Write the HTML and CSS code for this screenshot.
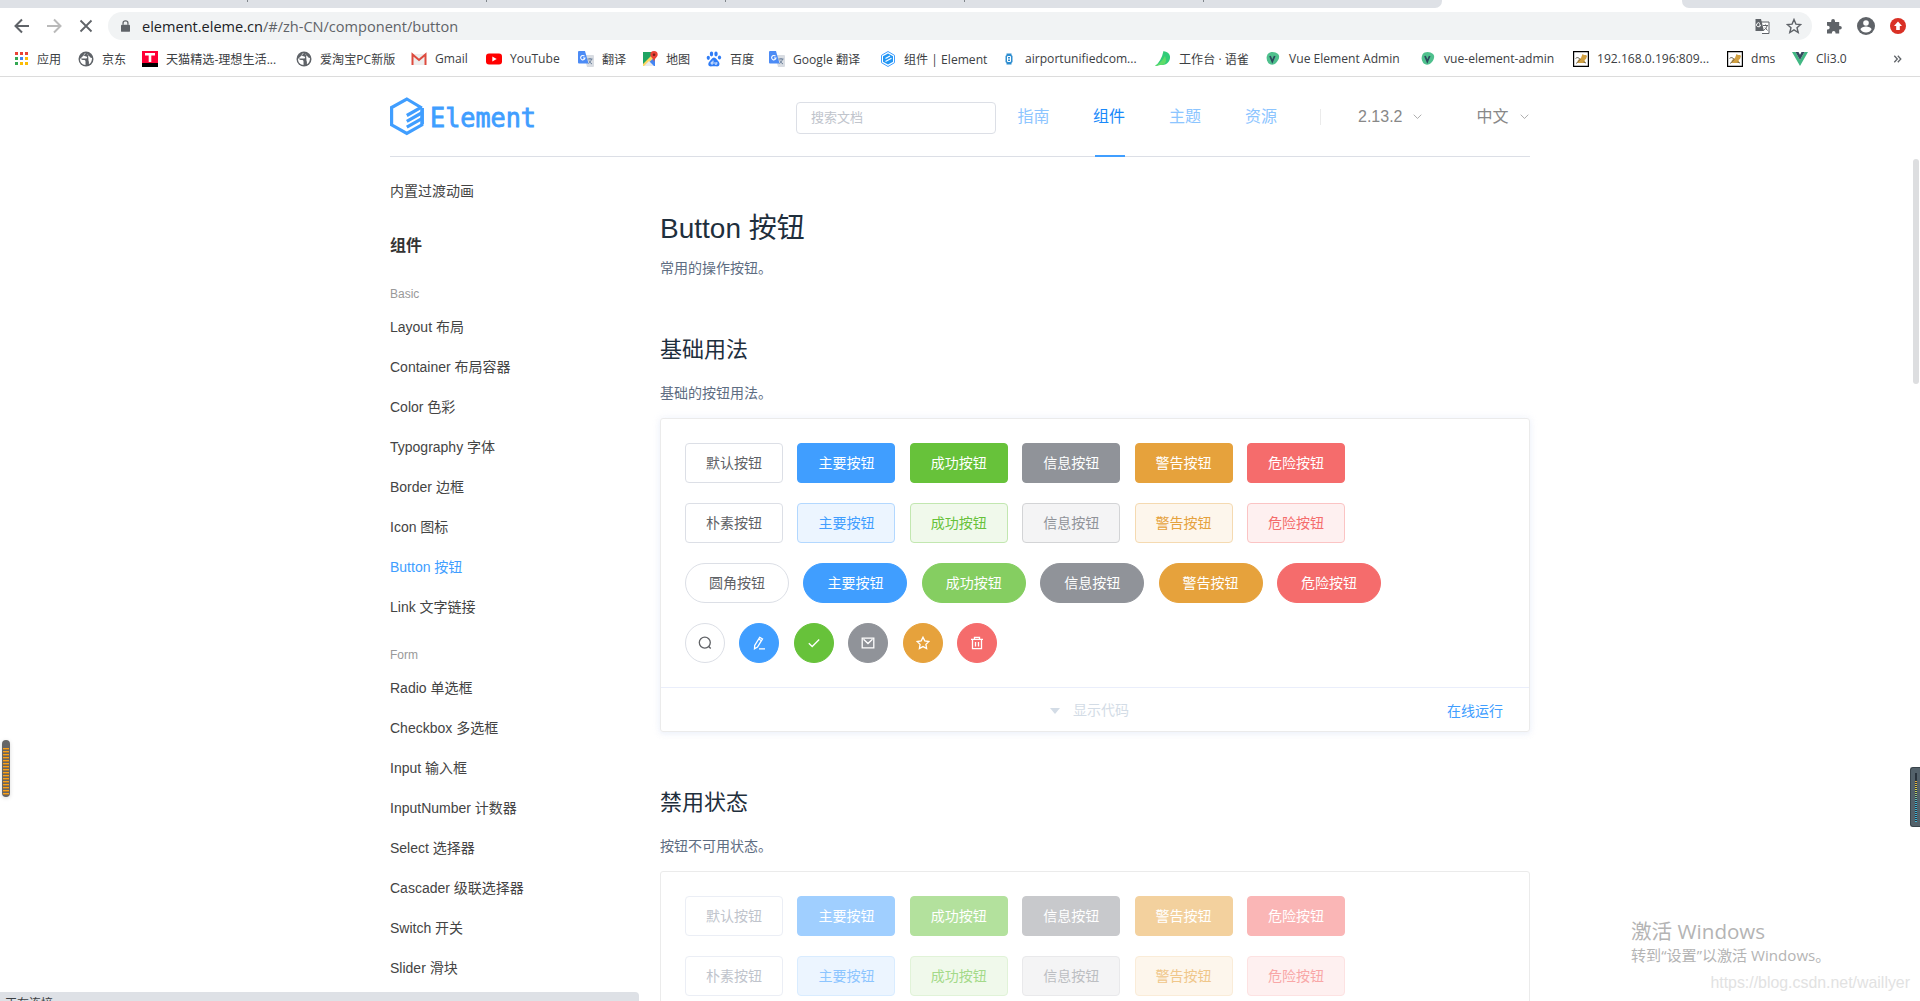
FILE: index.html
```html
<!DOCTYPE html>
<html lang="zh-CN">
<head>
    <meta charset="UTF-8">
    <meta name="viewport" content="width=device-width, initial-scale=1.0">
    <title>组件 | Element</title>
    <link rel="stylesheet" href="styles.css">
</head>
<body>
    <svg class="defs" width="0" height="0">
        <symbol id="globe" viewBox="0 0 16 16"><circle cx="8" cy="8" r="7.500" fill="#5f6368"/><path d="M8 2C6 2.500 5.500 3.500 6 4.500s2.500.5 3 1.500-.5 1.500-1.500 1.500H3c0 1 1.500 1.500 3 1.500 1 0 1.500.5 1.500 1.500V14c-3-.2-5.500-2.500-5.500-6M10 2.500c-1 1 0 2 1 2.500s1 2 3 2c0 3-1 5-3 6.200-.5-1.200.5-2.200-.5-3.200" fill="#fff"/></symbol>
        <symbol id="translate" viewBox="0 0 16 16"><path d="M6 4h9a1 1 0 0 1 1 1v10a1 1 0 0 1-1 1H9z" fill="#d8dce2"/><path d="M9.500 8h5M12 7v1M13.500 8c-.5 2-1.500 3.500-3 4.500M11 9.500c.5 1.500 1.500 2.500 3 3.500" stroke="#6b7f99" fill="none"/><path d="M1 0h6l3.500 12.500H1a1 1 0 0 1-1-1V1a1 1 0 0 1 1-1z" fill="#4c8bf5"/><path d="M6.500 5.200A2.200 2.200 0 1 0 7 7H5" stroke="#fff" fill="none" stroke-width="1.100"/></symbol>
        <symbol id="vue-admin" viewBox="0 0 16 16"><path d="M2.500 3.500c2-3.500 8-3 10.500-.5s.5 6.500-2 9-6.500 2-8-.5-2-5-.5-8z" fill="#4fc08d"/><path d="M5 5l2.300 5.500L9.700 5" stroke="#2c4a5e" stroke-width="1.800" fill="none"/></symbol>
        <symbol id="tomcat" viewBox="0 0 16 16"><path d="M.6.6h14.800v14.800H.6z" fill="#fff" stroke="#000" stroke-width="1.200"/><path d="M4 12l1-3 3-2 1.500-4 1.500 1h2l1 1-1 3-1.500 1 1 3z" fill="#d1a041"/><path d="M2.500 7.500l1.500-1 2 .5 1 1.500-1.500 2-2.500 2M10.500 11l2.500 1" stroke="#6b6250" fill="none" stroke-width=".9"/></symbol>
        <symbol id="chevron" viewBox="0 0 10 10"><path d="M.8 3l4.200 4.200L9.200 3" fill="none" stroke="currentColor" stroke-width=".9"/></symbol>
    </svg>

    <div class="browser">
        <div class="tab-strip">
            <div class="tabs-left"><i></i><i></i><i></i><i></i><i></i></div>
            <div class="tab-active"></div>
            <div class="tabs-right"></div>
        </div>
        <div class="toolbar">
            <svg class="nav-icon" viewBox="0 0 16 16"><path d="M15 8H2M8 1.500L1.500 8 8 14.500" fill="none" stroke="#5f6368" stroke-width="2"/></svg>
            <svg class="nav-icon" viewBox="0 0 16 16"><path d="M1 8h13M8 1.500L14.500 8 8 14.500" fill="none" stroke="#bababa" stroke-width="2"/></svg>
            <svg class="nav-icon" viewBox="0 0 16 16"><path d="M2.500 2.500l11 11M13.500 2.500l-11 11" fill="none" stroke="#5f6368" stroke-width="1.800"/></svg>
            <div class="omnibox">
                <svg class="lock" viewBox="0 0 10 13"><path d="M1 5h8a1 1 0 0 1 1 1v6a1 1 0 0 1-1 1H1a1 1 0 0 1-1-1V6a1 1 0 0 1 1-1z" fill="#5f6368"/><path d="M2.300 5V3a2.700 2.200 0 0 1 5.400 0v2" fill="none" stroke="#5f6368" stroke-width="1.400"/></svg>
                <span class="url">element.eleme.cn<span class="path">/#/zh-CN/component/button</span></span>
                <svg class="box-icon" viewBox="0 0 16 16"><path d="M7 4h8v11.500H8" fill="#fff" stroke="#5f6368"/><path d="M9 7.500h5M11.500 6.500v1M13 8c-.5 2-1.500 3-3 4M11 9.500l2.500 3" stroke="#5f6368" fill="none"/><path d="M1.500 1H7l3 12H1.500z" fill="#5f6368"/><path d="M6 5.500A2 2 0 1 0 6.500 7H5" stroke="#fff" fill="none"/></svg>
                <svg class="box-icon star" viewBox="0 0 16 16"><path d="M8 1.500l1.900 4.600 4.800.4-3.700 3.200 1.200 4.800L8 11.900l-4.200 2.600L5 9.700 1.300 6.500l4.800-.4z" fill="none" stroke="#5f6368" stroke-width="1.400"/></svg>
            </div>
            <svg class="ext" viewBox="0 0 16 16"><path d="M1 4h4.200V3a1.900 1.900 0 0 1 3.800 0v1h4.200v4h.8a1.800 1.800 0 0 1 0 3.600h-.8V15.500H9.500v-.8a1.800 1.800 0 0 0-3.600 0v.8H1v-4h.8a1.900 1.900 0 0 0 0-3.800H1z" fill="#5f6368"/></svg>
            <svg class="avatar" viewBox="0 0 18 18"><circle cx="9" cy="9" r="9" fill="#5f6368"/><circle cx="9" cy="6" r="2.800" fill="#fff"/><path d="M3.500 12.500c0-2 3.500-3 5.500-3s5.500 1 5.500 3c-1.200 1.800-3 3-5.500 3s-4.300-1.200-5.500-3z" fill="#fff"/></svg>
            <svg class="update" viewBox="0 0 16 16"><circle cx="8" cy="8" r="8" fill="#d93025"/><path d="M8 3.500L12 8H9.800v4H6.200V8H4z" fill="#fff"/></svg>
        </div>
        <div class="bookmarks">
            <div class="bookmark apps"><svg viewBox="0 0 16 16"><path d="M2 1h3v3H2zM7 1h3v3H7zM12 1h3v3h-3z" fill="#ea4335"/><path d="M2 6h3v3H2zM2 11h3v3H2z" fill="#34a853"/><path d="M7 6h3v3H7z" fill="#4285f4"/><path d="M12 6h3v3h-3zM7 11h3v3H7zM12 11h3v3h-3z" fill="#fbbc05"/></svg><span>应用</span></div>
            <div class="bookmark"><svg><use href="#globe"/></svg><span>京东</span></div>
            <div class="bookmark"><svg viewBox="0 0 16 16"><path d="M0 0h16v16H0z" fill="#ff0036"/><path d="M0 12h16v4H0z" fill="#000"/><path d="M3 2h10v2.500H9.300V11H6.700V4.500H3z" fill="#fff"/></svg><span>天猫精选-理想生活...</span></div>
            <div class="bookmark"><svg><use href="#globe"/></svg><span>爱淘宝PC新版</span></div>
            <div class="bookmark"><svg viewBox="0 0 16 16"><path d="M1 3h14v11H1z" fill="#eee"/><path d="M1.500 14V3.500L8 9l6.500-5.500V14" fill="none" stroke="#dd4b3e" stroke-width="2"/></svg><span>Gmail</span></div>
            <div class="bookmark"><svg viewBox="0 0 16 16"><rect y="2.500" width="16" height="11" rx="3" fill="#f00"/><path d="M6.300 5.500v5L10.700 8z" fill="#fff"/></svg><span>YouTube</span></div>
            <div class="bookmark"><svg><use href="#translate"/></svg><span>翻译</span></div>
            <div class="bookmark"><svg viewBox="0 0 16 16"><path d="M1 1h12v14H1z" fill="#1fa463"/><path d="M1 15L13 3v12z" fill="#4285f4"/><path d="M1 13L12 2l2 3L3 15H1z" fill="#fdd663"/><path d="M7 10l5 5H2z" fill="#e8eaed"/><path d="M12 0a3.700 3.700 0 0 1 3.700 3.700C15.700 6 12.500 7 12 11c-.5-4-3.700-5-3.700-7.300A3.700 3.700 0 0 1 12 0z" fill="#ea4335"/><circle cx="12" cy="3.700" r="1.300" fill="#7b1f18"/></svg><span>地图</span></div>
            <div class="bookmark"><svg viewBox="0 0 16 16"><g fill="#2f7cf6"><ellipse cx="5.500" cy="3" rx="1.700" ry="2.400"/><ellipse cx="10" cy="3" rx="1.700" ry="2.400"/><ellipse cx="2.300" cy="6.800" rx="1.600" ry="2.100"/><ellipse cx="13.500" cy="6.500" rx="1.600" ry="2.100"/><path d="M8 6.500c2 0 3 2.500 4.500 4s1.500 5-1.500 5c-1.500 0-4.500-.3-6 0-3 0-3.500-3-1.500-5C5 9 6 6.500 8 6.500z"/></g><path d="M7 9.500V13H5.200v-1.800H7M9 11v2.200h1.800V11" fill="none" stroke="#fff" stroke-width=".8"/></svg><span>百度</span></div>
            <div class="bookmark"><svg><use href="#translate"/></svg><span>Google 翻译</span></div>
            <div class="bookmark"><svg viewBox="0 0 16 16"><path d="M8 .5l6.500 3.800v7.400L8 15.500l-6.500-3.800V4.300z" fill="#fff" stroke="#409eff"/><path d="M8 2.500l5 2.800v5.400l-5 2.800-5-2.800V5.300z" fill="#2296f3"/><path d="M5.500 7.500L10 5M5.500 10.500l6-3.200" stroke="#fff" stroke-width="1.200"/></svg><span>组件 | Element</span></div>
            <div class="bookmark"><svg viewBox="0 0 16 16"><path d="M5.500 2.500h5V4l1 1v6l-1 1v1.500h-5V12l-1-1V5l1-1z" fill="#2d8dd0"/><path d="M6.500 5.500h3v5h-3zM6.500 8h3" fill="none" stroke="#fff"/></svg><span>airportunifiedcom...</span></div>
            <div class="bookmark"><svg viewBox="0 0 16 16"><path d="M0 15C4 12 7 7 8.500 0c3.500 1 6 2 6.500 5.500S13 14 7 14c-3 0-4 .5-7 1z" fill="#31cc79"/><path d="M0 15c5-3 8-6 10-10 2 5 1 8-3 9-3 0-4 .5-7 1z" fill="#5fdc68"/></svg><span>工作台 · 语雀</span></div>
            <div class="bookmark"><svg><use href="#vue-admin"/></svg><span>Vue Element Admin</span></div>
            <div class="bookmark"><svg><use href="#vue-admin"/></svg><span>vue-element-admin</span></div>
            <div class="bookmark"><svg><use href="#tomcat"/></svg><span>192.168.0.196:809...</span></div>
            <div class="bookmark"><svg><use href="#tomcat"/></svg><span>dms</span></div>
            <div class="bookmark"><svg viewBox="0 0 16 16"><path d="M0 1h3.500L8 9l4.500-8H16L8 15z" fill="#41b883"/><path d="M3.500 1h3L8 3.700 9.500 1h3L8 9z" fill="#35495e"/></svg><span>Cli3.0</span></div>
            <div class="more"><svg viewBox="0 0 8 8"><path d="M.8.8L3.800 4l-3 3.200M4.300.8L7.300 4l-3 3.200" fill="none" stroke="#5f6368" stroke-width="1.300"/></svg></div>
        </div>
    </div>

    <header class="header container">
        <svg class="logo" viewBox="0 0 148 40">
            <path d="M31.900 11L16.800 2 1.600 10.500v17.300l15.200 8.500 15.100-8.500V11" fill="none" stroke="#409eff" stroke-width="3.200"/>
            <path d="M16.800 18.500L31.500 10.200M16.800 24.300l15.500-8.800M16.800 30.100l15.500-8.800" fill="none" stroke="#409eff" stroke-width="3.200"/>
            <path d="M32.400 11v16" stroke="#409eff" stroke-width="3"/>
            <text x="40" y="29.500" textLength="106" lengthAdjust="spacingAndGlyphs">Element</text>
        </svg>
        <div class="search">搜索文档</div>
        <nav class="nav">
            <a>指南</a>
            <a class="active">组件</a>
            <a>主题</a>
            <a>资源</a>
        </nav>
        <span class="divider"></span>
        <div class="version">2.13.2<svg><use href="#chevron"/></svg></div>
        <div class="lang">中文<svg><use href="#chevron"/></svg></div>
    </header>

    <main class="main container">
        <aside class="side-nav">
            <a>内置过渡动画</a>
            <h4>组件</h4>
            <h5>Basic</h5>
            <a>Layout 布局</a>
            <a>Container 布局容器</a>
            <a>Color 色彩</a>
            <a>Typography 字体</a>
            <a>Border 边框</a>
            <a>Icon 图标</a>
            <a class="active">Button 按钮</a>
            <a>Link 文字链接</a>
            <h5 class="form-group">Form</h5>
            <a>Radio 单选框</a>
            <a>Checkbox 多选框</a>
            <a>Input 输入框</a>
            <a>InputNumber 计数器</a>
            <a>Select 选择器</a>
            <a>Cascader 级联选择器</a>
            <a>Switch 开关</a>
            <a>Slider 滑块</a>
        </aside>

        <article class="content">
            <h2>Button 按钮</h2>
            <p>常用的操作按钮。</p>
            <h3>基础用法</h3>
            <p>基础的按钮用法。</p>
            <section class="demo hover">
                <div class="source">
                    <div class="row">
                        <button class="btn">默认按钮</button>
                        <button class="btn primary">主要按钮</button>
                        <button class="btn success">成功按钮</button>
                        <button class="btn info">信息按钮</button>
                        <button class="btn warning">警告按钮</button>
                        <button class="btn danger">危险按钮</button>
                    </div>
                    <div class="row">
                        <button class="btn">朴素按钮</button>
                        <button class="btn primary plain">主要按钮</button>
                        <button class="btn success plain">成功按钮</button>
                        <button class="btn info plain">信息按钮</button>
                        <button class="btn warning plain">警告按钮</button>
                        <button class="btn danger plain">危险按钮</button>
                    </div>
                    <div class="row">
                        <button class="btn round">圆角按钮</button>
                        <button class="btn round primary">主要按钮</button>
                        <button class="btn round success light">成功按钮</button>
                        <button class="btn round info">信息按钮</button>
                        <button class="btn round warning">警告按钮</button>
                        <button class="btn round danger">危险按钮</button>
                    </div>
                    <div class="row">
                        <button class="btn circle"><svg viewBox="0 0 14 14"><circle cx="6.800" cy="6.600" r="5.500"/><path d="M10.700 10.500l2 2"/></svg></button>
                        <button class="btn circle primary"><svg viewBox="0 0 14 14"><path d="M7.700 1.300l2.800 1.600-5 8.200-3 1.700.2-3.300zM6.700 3l2.800 1.700M7 12.800h6"/></svg></button>
                        <button class="btn circle success"><svg viewBox="0 0 14 14"><path d="M1.800 7.200l3.400 3.300 7-7"/></svg></button>
                        <button class="btn circle info"><svg viewBox="0 0 14 14"><path d="M1.200 2.200h11.600v9.600H1.200zM2.500 3.200L7 7.500l4.500-4.300"/></svg></button>
                        <button class="btn circle warning"><svg viewBox="0 0 14 14"><path d="M7 1.200l1.800 3.700 4.100.6-3 2.900.7 4.100L7 10.600l-3.600 1.900.7-4.100-3-2.900 4.100-.6z"/></svg></button>
                        <button class="btn circle danger"><svg viewBox="0 0 14 14"><path d="M1 3.300h12M4.500 3V1.300h5V3M2.500 3.500v9.200h9V3.500M5.500 6v4.500M8.500 6v4.500"/></svg></button>
                    </div>
                </div>
                <div class="control">
                    <i class="caret"></i><span class="toggle">显示代码</span>
                    <a class="run">在线运行</a>
                </div>
            </section>

            <h3>禁用状态</h3>
            <p>按钮不可用状态。</p>
            <section class="demo">
                <div class="source disabled">
                    <div class="row">
                        <button class="btn">默认按钮</button>
                        <button class="btn primary">主要按钮</button>
                        <button class="btn success">成功按钮</button>
                        <button class="btn info">信息按钮</button>
                        <button class="btn warning">警告按钮</button>
                        <button class="btn danger">危险按钮</button>
                    </div>
                    <div class="row">
                        <button class="btn">朴素按钮</button>
                        <button class="btn primary plain">主要按钮</button>
                        <button class="btn success plain">成功按钮</button>
                        <button class="btn info plain">信息按钮</button>
                        <button class="btn warning plain">警告按钮</button>
                        <button class="btn danger plain">危险按钮</button>
                    </div>
                </div>
            </section>
        </article>
    </main>

    <div class="scrollbar"></div>
    <div class="meter meter-left"><i></i></div>
    <div class="meter meter-right"><i></i></div>
    <div class="activate">
        <div class="activate-title">激活 Windows</div>
        <div class="activate-text">转到“设置”以激活 Windows。</div>
    </div>
    <div class="blog-mark">https://blog.csdn.net/waillyer</div>
    <div class="status">正在连接...</div>
</body>
</html>
```
FILE: styles.css
```css
* {
    box-sizing: border-box;
}

body {
    margin: 0;
    height: 1001px;
    position: relative;
    overflow: hidden;
    background: #fff;
    font-family: "Liberation Sans", "Noto Sans CJK SC", sans-serif;
    font-size: 14px;
}

h2, h3, h4, h5, p {
    margin: 0;
    font-weight: 400;
}

.defs {
    position: absolute;
}

/* browser chrome */
.browser {
    height: 77px;
    border-bottom: 1px solid #dcdcdc;
    font-family: "Open Sans", "Noto Sans CJK SC", sans-serif;
}

.tab-strip {
    display: flex;
    height: 8px;
}

.tabs-left {
    display: flex;
    gap: 238px;
    width: 1442px;
    padding-left: 247px;
    background: #dee1e6;
    border-bottom-right-radius: 7px;
}

.tabs-left i {
    width: 1px;
    height: 2px;
    background: #80868b;
}

.tab-active {
    width: 240px;
}

.tabs-right {
    flex: 1;
    background: #dee1e6;
    border-bottom-left-radius: 7px;
}

.toolbar {
    display: flex;
    align-items: center;
    height: 36px;
    padding-left: 14px;
}

.nav-icon {
    width: 16px;
    height: 16px;
    margin-right: 16px;
}

.omnibox {
    display: flex;
    align-items: center;
    width: 1704px;
    height: 28px;
    margin-left: -2px;
    padding: 0 10px 0 13px;
    border-radius: 14px;
    background: #f1f3f4;
}

.lock {
    width: 9px;
    height: 12px;
}

.url {
    flex: 1;
    margin-left: 12px;
    padding-bottom: 1px;
    font-size: 14.550px;
    color: #202124;
}

.path {
    color: #5f6368;
}

.box-icon {
    width: 16px;
    height: 16px;
}

.star {
    margin-left: 16px;
}

.ext {
    width: 16px;
    height: 16px;
    margin-left: 14px;
}

.avatar {
    width: 18px;
    height: 18px;
    margin-left: 15px;
}

.update {
    width: 16px;
    height: 16px;
    margin-left: 15px;
}

.bookmarks {
    display: grid;
    grid-template-columns: 65px 64px 154px 115px 75px 92px 64px 64px 63px 111px 121px 154px 110px 155px 153px 154px 65px 101px 16px;
    align-items: center;
    height: 29px;
    padding-left: 13px;
}

.bookmark {
    display: flex;
    align-items: center;
    gap: 8px;
    font-size: 12.100px;
    color: #3c4043;
    white-space: nowrap;
}

.bookmark svg {
    flex: none;
    width: 16px;
    height: 16px;
}

.more svg {
    display: block;
    width: 9px;
    height: 8px;
}

/* site header */
.container {
    width: 1140px;
    margin: 0 auto;
}

.header {
    display: flex;
    align-items: center;
    height: 80px;
    border-bottom: 1px solid #dcdfe6;
}

.logo {
    width: 148px;
    height: 40px;
    overflow: visible;
}

.logo text {
    font-family: "DejaVu Sans Mono", monospace;
    font-size: 26px;
    fill: #409eff;
    stroke: #409eff;
    stroke-width: .8px;
}

.search {
    width: 200px;
    height: 32px;
    margin-top: 2px;
    margin-left: 258px;
    padding-left: 14px;
    border: 1px solid #dcdfe6;
    border-radius: 4px;
    font-size: 13px;
    line-height: 29px;
    color: #c0c4cc;
}

.nav {
    display: flex;
}

.nav a {
    display: flex;
    justify-content: center;
    width: 76px;
    height: 80px;
    font-size: 16px;
    line-height: 79px;
    color: #8cc5ff;
}

.nav a:first-child {
    width: 75px;
}

.nav .active {
    color: #1989fa;
    background: linear-gradient(#409eff, #409eff) 24px bottom / 30px 2px no-repeat;
}

.divider {
    width: 1px;
    height: 16px;
    margin-left: 21px;
    background: #ebebeb;
}

.version, .lang {
    display: flex;
    align-items: center;
    gap: 11px;
    height: 40px;
    margin-left: 37px;
    font-size: 16px;
    line-height: 40px;
    color: #888;
}

.lang {
    margin-left: 53px;
}

.version svg, .lang svg {
    width: 9px;
    height: 9px;
    margin-right: 1px;
    color: #999;
}

/* side navigation */
.main {
    display: flex;
}

.side-nav {
    width: 270px;
    padding-top: 14px;
}

.side-nav a {
    display: block;
    height: 40px;
    line-height: 40px;
    color: #444;
}

.side-nav h4 {
    height: 69px;
    line-height: 70px;
    font-size: 16px;
    font-weight: 700;
    color: #333;
}

.side-nav h5 {
    height: 27px;
    line-height: 28px;
    font-size: 12px;
    color: #999;
}

.side-nav h5.form-group {
    margin-top: 14px;
}

.side-nav .active {
    color: #409eff;
}

/* content */
.content {
    width: 870px;
    padding-top: 50px;
}

.content h2 {
    height: 42px;
    line-height: 44px;
    font-size: 28px;
    color: #1f2f3d;
}

.content p {
    height: 40px;
    line-height: 40px;
    color: #5e6d82;
}

.content h3 {
    height: 44px;
    margin-top: 38px;
    line-height: 48px;
    font-size: 22px;
    color: #1f2f3d;
}

.content h2 + p {
    margin-top: -1px;
    margin-bottom: 21px;
}

.content h3 + p {
    margin-top: 3px;
}

.demo {
    margin-top: 5px;
    border: 1px solid #ebebeb;
    border-radius: 3px;
}

.hover {
    box-shadow: 0 0 8px 0 rgba(232, 237, 250, .6), 0 2px 4px 0 rgba(232, 237, 250, .5);
    margin-bottom: 47px;
}

.source {
    display: flex;
    flex-direction: column;
    gap: 20px;
    padding: 24px;
}

.row {
    display: flex;
    gap: 14.400px;
}

.btn {
    width: 98px;
    height: 40px;
    padding: 0 0 3px;
    border: 1px solid #dcdfe6;
    border-radius: 4px;
    background: #fff;
    font: inherit;
    color: #606266;
}

.primary {
    color: #fff;
    background: #409eff;
    border-color: #409eff;
}

.success {
    color: #fff;
    background: #67c23a;
    border-color: #67c23a;
}

.info {
    color: #fff;
    background: #909399;
    border-color: #909399;
}

.warning {
    color: #fff;
    background: #e6a23c;
    border-color: #e6a23c;
}

.danger {
    color: #fff;
    background: #f56c6c;
    border-color: #f56c6c;
}

.light {
    background: #85ce61;
    border-color: #85ce61;
}

.primary.plain {
    color: #409eff;
    background: #ecf5ff;
    border-color: #b3d8ff;
}

.success.plain {
    color: #67c23a;
    background: #f0f9eb;
    border-color: #c2e7b0;
}

.info.plain {
    color: #909399;
    background: #f4f4f5;
    border-color: #d3d4d6;
}

.warning.plain {
    color: #e6a23c;
    background: #fdf6ec;
    border-color: #f5dab1;
}

.danger.plain {
    color: #f56c6c;
    background: #fef0f0;
    border-color: #fbc4c4;
}

.round {
    width: 104px;
    border-radius: 20px;
}

.circle {
    display: flex;
    align-items: center;
    justify-content: center;
    width: 40px;
    padding: 0;
    border-radius: 50%;
}

.circle svg {
    width: 14px;
    height: 14px;
    fill: none;
    stroke: currentColor;
    stroke-width: 1.300;
}

.disabled .btn {
    color: #c0c4cc;
    border-color: #ebeef5;
}

.disabled .primary { color: #fff; background: #a0cfff; border-color: #a0cfff; }
.disabled .success { color: #fff; background: #b3e19d; border-color: #b3e19d; }
.disabled .info { color: #fff; background: #c8c9cc; border-color: #c8c9cc; }
.disabled .warning { color: #fff; background: #f3d19e; border-color: #f3d19e; }
.disabled .danger { color: #fff; background: #fab6b6; border-color: #fab6b6; }

.disabled .primary.plain { color: #8cc5ff; background: #ecf5ff; border-color: #d9ecff; }
.disabled .success.plain { color: #a4da89; background: #f0f9eb; border-color: #e1f3d8; }
.disabled .info.plain { color: #bcbec2; background: #f4f4f5; border-color: #e9e9eb; }
.disabled .warning.plain { color: #f0c78a; background: #fdf6ec; border-color: #faecd8; }
.disabled .danger.plain { color: #f9a7a7; background: #fef0f0; border-color: #fde2e2; }

.control {
    display: grid;
    grid-template-columns: 1fr auto auto 1fr;
    align-items: center;
    height: 44px;
    border-top: 1px solid #eaeefb;
    color: #d3dce6;
}

.caret {
    grid-column: 2;
    margin-top: 2px;
    margin-right: 13px;
    border: 5px solid transparent;
    border-top: 6px solid #d3dce6;
    border-bottom: 0;
}

.toggle {
    margin-right: 11px;
    padding-bottom: 2px;
}

.run {
    justify-self: end;
    margin-right: 26px;
    color: #409eff;
}

/* overlays */
.scrollbar {
    position: absolute;
    top: 159px;
    right: 1px;
    width: 6px;
    height: 225px;
    border-radius: 3px;
    background: #dddee0;
}

.meter {
    position: absolute;
    padding: 8px 1px 2px;
}

.meter i {
    display: block;
    height: 100%;
}

.meter-left {
    top: 740px;
    left: 2px;
    width: 8px;
    height: 57px;
    border-radius: 4px;
    background: #666;
    box-shadow: 0 1px 4px rgba(0, 0, 0, .15);
}

.meter-left i {
    background: repeating-linear-gradient(#f9a11b 0 1px, #a8762f 1px 2px, #666 2px 3px);
}

.meter-right {
    top: 767px;
    right: 0;
    width: 10px;
    height: 60px;
    padding: 5px 3px 4px 4px;
    border: 1px solid #39444b;
    border-right: 0;
    border-radius: 3px 0 0 3px;
    background: #53616a;
}

.meter-right i {
    background: repeating-linear-gradient(transparent 0 1px, #29333c 1px 2px), linear-gradient(#29333c 0 16%, #e5a63a 16%, #dbd74a 35%, #40b3d5 60%);
}

.activate {
    position: absolute;
    left: 1631px;
    top: 917px;
    font-family: "Open Sans", "Noto Sans CJK SC", sans-serif;
    color: #b4b4b4;
    white-space: nowrap;
}

.activate-title {
    font-size: 20.600px;
    line-height: 28px;
}

.activate-text {
    font-size: 15.100px;
    line-height: 20px;
}

.blog-mark {
    position: absolute;
    right: 10px;
    top: 973px;
    font-size: 15.900px;
    line-height: 20px;
    color: #e2e2e2;
}

.status {
    position: absolute;
    left: 0;
    bottom: 0;
    width: 639px;
    height: 9px;
    padding: 4px 5px 0;
    overflow: hidden;
    border-top-right-radius: 4px;
    background: #dee1e6;
    font-family: "Open Sans", "Noto Sans CJK SC", sans-serif;
    font-size: 12px;
    line-height: 16px;
    color: #3c4043;
}
```
